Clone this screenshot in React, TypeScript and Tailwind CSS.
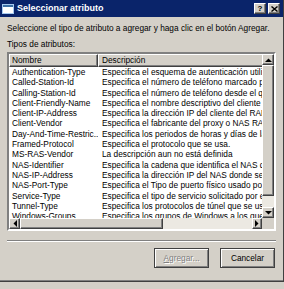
import React from "react";

const rows: [string, string][] = [
  ["Authentication-Type", "Especifica el esquema de autenticación utilizado para verificar al usuario"],
  ["Called-Station-Id", "Especifica el número de teléfono marcado por el usuario"],
  ["Calling-Station-Id", "Especifica el número de teléfono desde el que se originó la llamada"],
  ["Client-Friendly-Name", "Especifica el nombre descriptivo del cliente RADIUS"],
  ["Client-IP-Address", "Especifica la dirección IP del cliente del RADIUS"],
  ["Client-Vendor", "Especifica el fabricante del proxy o NAS RADIUS"],
  ["Day-And-Time-Restric...", "Especifica los periodos de horas y días de la semana"],
  ["Framed-Protocol", "Especifica el protocolo que se usa."],
  ["MS-RAS-Vendor", "La descripción aun no está definida"],
  ["NAS-Identifier", "Especifica la cadena que identifica el NAS que origina"],
  ["NAS-IP-Address", "Especifica la dirección IP del NAS donde se origina"],
  ["NAS-Port-Type", "Especifica el Tipo de puerto físico usado por el NAS"],
  ["Service-Type", "Especifica el tipo de servicio solicitado por el usuario"],
  ["Tunnel-Type", "Especifica los protocolos de túnel que se usan"],
  ["Windows-Groups", "Especifica los grupos de Windows a los que pertenece"],
];

const raised =
  "border border-t-white border-l-white border-b-[#404040] border-r-[#404040] shadow-[inset_-1px_-1px_0_#808080] bg-[#d4d0c8]";

function Arrow({ dir }: { dir: "up" | "down" | "left" | "right" }) {
  const pts = {
    up: "0,4 3.5,0.5 7,4",
    down: "0,0 3.5,3.5 7,0",
    left: "4,0 0.5,3.5 4,7",
    right: "0,0 3.5,3.5 0,7",
  }[dir];
  const vert = dir === "up" || dir === "down";
  return (
    <svg width={vert ? 7 : 4} height={vert ? 4 : 7} viewBox={vert ? "0 0 7 4" : "0 0 4 7"}>
      <polygon points={pts} fill="#000" />
    </svg>
  );
}

export default function App() {
  return (
    <div
      className="w-[284px] h-[289px] bg-[#d4d0c8] overflow-hidden text-black"
      style={{ fontFamily: '"Liberation Sans", Arial, sans-serif' }}
    >
      <div className="w-[284px] h-[282px] flex flex-col border-b border-r border-b-[#404040] border-r-[#404040] shadow-[inset_0_-1px_0_#808080]">
        {/* title bar */}
        <div className="h-[17px] bg-[#0a246a] flex items-center pl-[2px] pr-[3px]">
          <div className="w-[12px] h-[10px] bg-white border border-[#a6caf0] shadow-[inset_0_2px_0_#3a6ea5]" />
          <span className="ml-[3px] text-white font-bold text-[9px] leading-none">
            Seleccionar atributo
          </span>
          <div className="ml-auto flex gap-[2px]">
            <div className={`${raised} w-[12px] h-[11px] flex items-center justify-center text-[8px] font-bold leading-none`}>
              ?
            </div>
            <div className={`${raised} w-[12px] h-[11px] flex items-center justify-center`}>
              <svg width="7" height="6" viewBox="0 0 7 6">
                <path d="M0.5 0.5 L6.5 5.5 M6.5 0.5 L0.5 5.5" stroke="#000" strokeWidth="1.4" />
              </svg>
            </div>
          </div>
        </div>

        <div className="flex flex-col px-[7px] text-[8.3px]">
          <div className="mt-[6px] h-[11px] leading-[11px] whitespace-nowrap">
            Seleccione el tipo de atributo a agregar y haga clic en el botón Agregar.
          </div>
          <div className="mt-[5px] h-[11px] leading-[11px]">Tipos de atributos:</div>

          {/* list view */}
          <div className="mt-[2px] w-[269px] h-[179px] border-2 border-t-[#808080] border-l-[#808080] border-b-white border-r-white shadow-[inset_1px_1px_0_#404040] flex flex-col">
            <div className="flex h-[164px]">
              <div className="w-[253px] shrink-0 bg-white overflow-hidden">
                <div className="flex h-[13px] leading-[11px]">
                  <div className={`${raised} w-[89px] shrink-0 pl-[2px]`}>Nombre</div>
                  <div className={`${raised} w-[190px] shrink-0 pl-[3px] whitespace-nowrap`}>Descripción</div>
                </div>
                {rows.map(([name, desc]) => (
                  <div key={name} className="flex h-[10.3px] leading-[10.3px] whitespace-nowrap">
                    <div className="w-[89px] shrink-0 pl-[3px] overflow-hidden">{name}</div>
                    <div className="shrink-0 pl-[4px]">{desc}</div>
                  </div>
                ))}
              </div>
              {/* vertical scrollbar */}
              <div className="w-[12px] shrink-0 flex flex-col bg-[#ece9e2]">
                <div className={`${raised} h-[11px] flex items-center justify-center`}>
                  <Arrow dir="up" />
                </div>
                <div className={`${raised} h-[131px]`} />
                <div className="h-[11px]" />
                <div className={`${raised} h-[11px] flex items-center justify-center`}>
                  <Arrow dir="down" />
                </div>
              </div>
            </div>
            {/* horizontal scrollbar */}
            <div className="flex h-[11px]">
              <div className="w-[253px] shrink-0 flex bg-[#ece9e2]">
                <div className={`${raised} w-[11px] flex items-center justify-center`}>
                  <Arrow dir="left" />
                </div>
                <div className={`${raised} w-[143px]`} />
                <div className="flex-1" />
                <div className={`${raised} w-[10px] flex items-center justify-center`}>
                  <Arrow dir="right" />
                </div>
              </div>
              <div className="w-[12px] bg-[#d4d0c8]" />
            </div>
          </div>

          {/* separator */}
          <div className="mt-[9px] w-[269px] h-[2px] border-t border-t-[#808080] border-b border-b-white" />

          {/* buttons */}
          <div className="mt-[6px] flex justify-end gap-[11px] pr-[1px]">
            <div className="w-[55px] h-[20px] border border-[#404040] shadow-[inset_1px_1px_0_#fff,inset_-1px_-1px_0_#808080] flex items-center justify-center text-[#808080] [text-shadow:1px_1px_0_#fff]">
              <span><span className="underline">A</span>gregar...</span>
            </div>
            <div className="w-[55px] h-[20px] border border-[#404040] shadow-[inset_1px_1px_0_#fff,inset_-1px_-1px_0_#808080] flex items-center justify-center">
              Cancelar
            </div>
          </div>
        </div>
      </div>
    </div>
  );
}
